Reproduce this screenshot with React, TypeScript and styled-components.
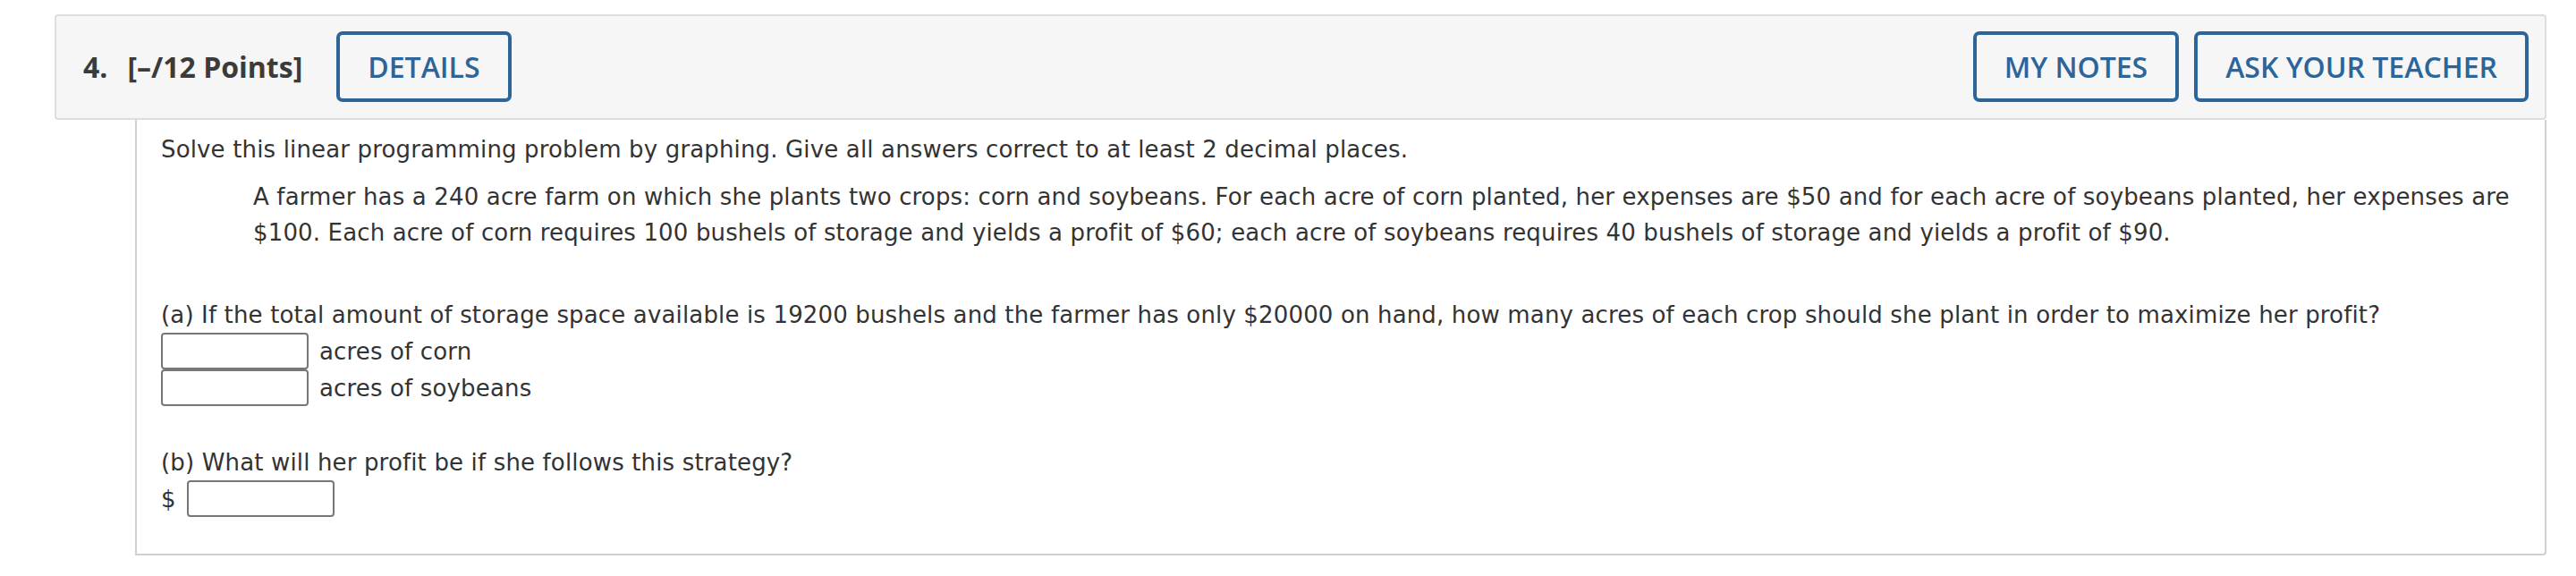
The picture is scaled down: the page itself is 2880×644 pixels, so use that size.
import React from "react";
import styled, { createGlobalStyle } from "styled-components";

const GlobalStyle = createGlobalStyle`
  html, body {
    margin: 0;
    padding: 0;
    background: #ffffff;
  }
  * { box-sizing: border-box; }
`;

const Page = styled.div`
  padding: 16px 33px 0 61px;
`;

const Header = styled.div`
  display: flex;
  align-items: center;
  background: #f6f6f6;
  border: 2px solid #dedede;
  border-radius: 4px;
  padding: 17px 18px 18px 30px;
`;

const Title = styled.div`
  font-family: "Open Sans", "Liberation Sans", sans-serif;
  font-weight: 700;
  font-size: 32px;
  color: #3b3b3b;
  display: flex;
  align-items: center;
  margin-right: 38px;
`;

const Number = styled.span`
  margin-right: 22px;
`;

const Actions = styled.div`
  display: flex;
  gap: 17px;
  margin-left: auto;
`;

const OutlineButton = styled.button`
  height: 79px;
  padding: 0 31px;
  border: 4px solid #2b6599;
  border-radius: 7px;
  background: transparent;
  color: #2b6599;
  font-family: "Open Sans", "Liberation Sans", sans-serif;
  font-weight: 600;
  font-size: 32px;
  cursor: pointer;
`;

const Body = styled.div`
  margin-left: 90px;
  border: 2px solid #d0d0d0;
  border-top: none;
  border-bottom-right-radius: 4px;
  padding: 13px 30px 41px 27px;
  font-family: "DejaVu Sans", Verdana, sans-serif;
  font-size: 26px;
  letter-spacing: 0.15px;
  line-height: 40px;
  color: #333333;
`;

const Para = styled.p<{ $top?: number; $indent?: number }>`
  margin: ${(p) => p.$top ?? 0}px 0 0 ${(p) => p.$indent ?? 0}px;
`;

const AnswerList = styled.div`
  display: flex;
  flex-direction: column;
`;

const AnswerRow = styled.div`
  display: flex;
  align-items: center;
  gap: 12px;
  height: 41px;
`;

const AnswerBox = styled.input`
  width: 165px;
  height: 41px;
  border: 2px solid #777777;
  border-radius: 4px;
  background: #ffffff;
  padding: 0 6px;
  font-family: inherit;
  font-size: 24px;
`;

const Label = styled.span`
  white-space: nowrap;
`;

export default function App() {
  return (
    <>
      <GlobalStyle />
      <Page>
        <Header>
          <Title>
            <Number>4.</Number>
            <span>[–/12 Points]</span>
          </Title>
          <OutlineButton>DETAILS</OutlineButton>
          <Actions>
            <OutlineButton>MY NOTES</OutlineButton>
            <OutlineButton>ASK YOUR TEACHER</OutlineButton>
          </Actions>
        </Header>
        <Body>
          <Para>
            Solve this linear programming problem by graphing. Give all answers correct to at least 2 decimal places.
          </Para>
          <Para $top={13} $indent={103}>
            A farmer has a 240 acre farm on which she plants two crops: corn and soybeans. For each acre of corn
            planted, her expenses are $50 and for each acre of soybeans planted, her expenses are $100. Each acre of
            corn requires 100 bushels of storage and yields a profit of $60; each acre of soybeans requires 40 bushels
            of storage and yields a profit of $90.
          </Para>
          <Para $top={52}>
            (a) If the total amount of storage space available is 19200 bushels and the farmer has only $20000 on
            hand, how many acres of each crop should she plant in order to maximize her profit?
          </Para>
          <AnswerList>
            <AnswerRow>
              <AnswerBox type="text" aria-label="acres of corn" />
              <Label>acres of corn</Label>
            </AnswerRow>
            <AnswerRow>
              <AnswerBox type="text" aria-label="acres of soybeans" />
              <Label>acres of soybeans</Label>
            </AnswerRow>
          </AnswerList>
          <Para $top={43}>(b) What will her profit be if she follows this strategy?</Para>
          <AnswerRow>
            <Label>$</Label>
            <AnswerBox type="text" aria-label="profit" />
          </AnswerRow>
        </Body>
      </Page>
    </>
  );
}
